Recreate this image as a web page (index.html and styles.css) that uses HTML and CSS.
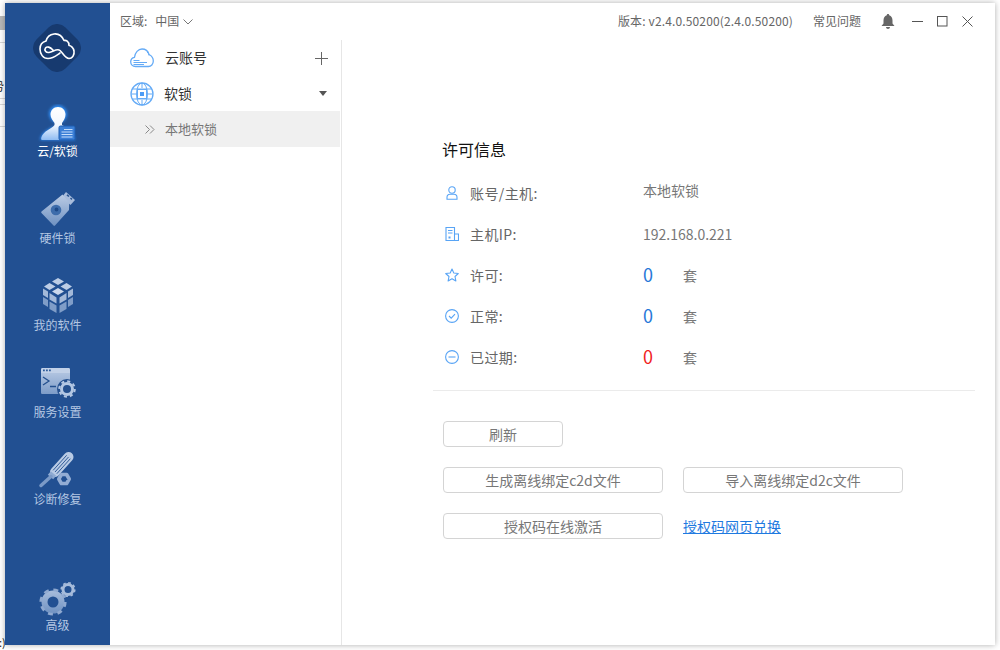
FILE: index.html
```html
<!DOCTYPE html>
<html lang="zh-CN">
<head>
<meta charset="utf-8">
<title>许可信息</title>
<link rel="stylesheet" href="styles.css">
</head>
<body>
<svg class="defs" width="0" height="0" aria-hidden="true">
  <defs>
    <linearGradient id="navg" gradientUnits="userSpaceOnUse" x1="0" y1="0" x2="0" y2="36">
      <stop offset="0" stop-color="#c3d2e9"/>
      <stop offset="1" stop-color="#6c8fc0"/>
    </linearGradient>
    <linearGradient id="actg" x1="0" y1="0" x2="0" y2="1">
      <stop offset="0" stop-color="#ffffff"/>
      <stop offset=".55" stop-color="#f2f7fe"/>
      <stop offset="1" stop-color="#8fbcf3"/>
    </linearGradient>
    <filter id="glow" x="-30%" y="-30%" width="160%" height="160%">
      <feGaussianBlur stdDeviation="1.4"/>
    </filter>
  </defs>
</svg>
<div class="backdrop">
  <span class="bit bit-a"></span>
  <span class="bit-line first"></span>
  <span class="bit-glyph">势</span>
  <span class="bit-line second"></span>
  <span class="bit-line third"></span>
  <span class="bit-line fourth"></span>
  <span class="bit-foot">:)</span>
</div>
<div class="window">
  <aside class="sidebar">
    <div class="logo">
      <svg width="48" height="48" viewBox="0 0 48 48">
        <rect x="3.500" y="3.500" width="41" height="41" rx="12" transform="rotate(45 24 24)" fill="#173a6f"/>
        <path d="M20 26C17 23 14 22 12.500 24C11 26 13 29 16 28.500C20 28 24 24 27 26.500C30 29 32 34.500 36 34.500C40 34.500 41.500 30 41 27C40.500 24 38 21.500 36 21.500C36 17 33 16 31 16.500C29 12 25 9.500 21 10C17 10.500 14 13 13 17C9 18 7 21.500 7 25C7 30 10 34.500 15 34.500C20 34.500 24 31 27 29" fill="none" stroke="#fff" stroke-width="1.600" stroke-linecap="round" stroke-linejoin="round"/>
      </svg>
    </div>
    <nav class="nav">
      <a class="nav-item active">
        <svg width="42" height="38" viewBox="0 0 42 38">
          <g filter="url(#glow)" fill="#2f8df5">
            <circle cx="21" cy="10" r="9"/><path d="M3 36C4 29 11 25 16 23H26C31 25 37 28 38 36Z"/>
          </g>
          <path d="M21 3C25.500 3 28.500 6.500 28.500 10.500C28.500 14 26.500 17 25 19V21C28 23 32 24 34 26V36H5C4 36 4 34.500 4.500 33C6.500 27 14.500 25 17.500 21V19C16 17 13.500 14 13.500 10.500C13.500 6.500 16.500 3 21 3Z" fill="url(#actg)"/>
          <rect x="22" y="22" width="16" height="14" rx="1.500" fill="#3b7fd6" stroke="#1d5db0"/>
          <path d="M27 25.500H35.500M24.500 28H35.500M24.500 30.500H35.500M24.500 33H35.500" stroke="#c5defb" stroke-width="1.100"/>
        </svg>
        <span>云/软锁</span>
      </a>
      <a class="nav-item">
        <svg width="42" height="38" viewBox="0 0 42 38">
          <path d="M29 1L38 9L33.500 14L25 6Z" fill="#a8bcdc"/>
          <path d="M30 3.800l2 1.700M33.500 7l1.500 1.300" stroke="#2b5692" stroke-width="1.600"/>
          <path d="M25.500 3.500L32 11.500C32.500 12 32.500 12.500 32.200 13L32 19L18 34.500C17.500 35 17 35 16.500 34.500L4.500 22C4 21.500 4 21 4.500 20.500Z" fill="url(#navg)"/>
          <circle cx="19" cy="19" r="5.300" fill="#3d6cab"/>
          <circle cx="19.500" cy="18.500" r="1.900" fill="#1e4a88"/>
        </svg>
        <span>硬件锁</span>
      </a>
      <a class="nav-item">
        <svg width="42" height="38" viewBox="0 0 42 38">
          <path d="M21 0L27 3.500L21 7L15 3.500Z" fill="#bccde6"/>
          <path d="M12.500 5L18.500 8.500L12.500 12L7 8.500Z" fill="#bccde6"/>
          <path d="M29.500 5L35 8.500L29.500 12L23.500 8.500Z" fill="#bccde6"/>
          <path d="M21 10L27 13.500L21 17L15 13.500Z" fill="#cbd8ec"/>
          <path d="M6 10.500L11 13.500V20L6 17Z" fill="#a3b9d9"/>
          <path d="M12.500 15L19.500 19.500V25.500L12.500 21.500Z" fill="#a3b9d9"/>
          <path d="M36 10.500L31 13.500V20L36 17Z" fill="#a3b9d9"/>
          <path d="M29.500 15L22.500 19.500V25.500L29.500 21.500Z" fill="#a3b9d9"/>
          <path d="M6 19L11 22V29L6 26Z" fill="#7f9dc8"/>
          <path d="M12.500 23.500L19.500 27.500V35L12.500 31Z" fill="#7f9dc8"/>
          <path d="M36 19L31 22V29L36 26Z" fill="#7f9dc8"/>
          <path d="M29.500 23.500L22.500 27.500V35L29.500 31Z" fill="#7f9dc8"/>
        </svg>
        <span>我的软件</span>
      </a>
      <a class="nav-item">
        <svg width="42" height="38" viewBox="0 0 42 38">
          <path d="M4 4.500C4 3.500 4.500 3 5.500 3H31.500C32.500 3 33 3.500 33 4.500V8H4Z" fill="#c2d1e8"/>
          <path d="M4 8H33V27.500C33 28.500 32.500 29 31.500 29H5.500C4.500 29 4 28.500 4 27.500Z" fill="url(#navg)"/>
          <path d="M6 4.500h1.800v1.800H6zM9 4.500h1.800v1.800H9zM12 4.500h1.800v1.800H12z" fill="#2f5c9a"/>
          <path d="M6 12L12 16L6 20M13 21.500H19" fill="none" stroke="#24508f" stroke-width="1.300"/>
          <circle cx="30" cy="24" r="10" fill="#24508f"/>
          <circle cx="30" cy="24" r="5.500" fill="none" stroke="#b3c7e3" stroke-width="3"/>
          <circle cx="30" cy="24" r="7.800" fill="none" stroke="#b3c7e3" stroke-width="2" stroke-dasharray="3.060 3.060"/>
        </svg>
        <span>服务设置</span>
      </a>
      <a class="nav-item">
        <svg width="42" height="38" viewBox="0 0 42 38">
          <path d="M31.500 5L18 20" stroke="#b9cbe5" stroke-width="10" stroke-linecap="round"/>
          <path d="M33.350 6.700L19.850 21.700M31.500 5L18 20M29.650 3.300L16.150 18.300" stroke="#24508f" stroke-width=".9"/>
          <path d="M16.500 21.500L13.500 25" stroke="#8eaad2" stroke-width="7"/>
          <path d="M14 24.500L4 33.500" stroke="#7b9ac7" stroke-width="3.500" stroke-linecap="round"/>
          <path d="M21.800 27L24.400 22.500H29.600L32.200 27L29.600 31.500H24.400Z" fill="none" stroke="#93add4" stroke-width="3.600" stroke-linejoin="round"/>
        </svg>
        <span>诊断修复</span>
      </a>
      <a class="nav-item nav-bottom">
        <svg width="42" height="38" viewBox="0 0 42 38">
          <circle cx="16" cy="23" r="8.500" fill="none" stroke="url(#navg)" stroke-width="6"/>
          <circle cx="16" cy="23" r="12.200" fill="none" stroke="#8fa9d0" stroke-width="2.800" stroke-dasharray="4.900 4.680"/>
          <circle cx="31" cy="10.500" r="5" fill="none" stroke="#a7bcdb" stroke-width="3"/>
          <circle cx="31" cy="10.500" r="6.800" fill="none" stroke="#a7bcdb" stroke-width="1.600" stroke-dasharray="2.700 2.640"/>
        </svg>
        <span>高级</span>
      </a>
    </nav>
  </aside>
  <div class="main">
    <header class="topbar">
      <div class="region">
        <span class="lift">区域:</span>
        <span class="lift region-value">中国</span>
        <svg width="10" height="6" viewBox="0 0 10 6"><path d="M.5 .5L5 5L9.500 .5" fill="none" stroke="#777"/></svg>
      </div>
      <div class="top-right">
        <span class="version lift">版本: v2.4.0.50200(2.4.0.50200)</span>
        <span class="faq lift">常见问题</span>
        <svg class="bell" width="14" height="15" viewBox="0 0 14 15"><path d="M7 0C7.800 0 8.200 .5 8.200 1.200C10.500 2 11.500 4 11.500 6.500V9.500L13.500 12H.5L2.500 9.500V6.500C2.500 4 3.500 2 5.800 1.200C5.800 .5 6.200 0 7 0Z" fill="#666"/><path d="M5 13H9C9 14.300 8 15 7 15C6 15 5 14.300 5 13Z" fill="#666"/></svg>
        <div class="win-btns">
          <svg width="11" height="11" viewBox="0 0 11 11"><path d="M0 5.500H11" stroke="#555"/></svg>
          <svg width="11" height="11" viewBox="0 0 11 11"><rect x=".5" y=".5" width="9.500" height="9.500" fill="none" stroke="#555"/></svg>
          <svg width="11" height="11" viewBox="0 0 11 11"><path d="M.5 .5L10.500 10.500M10.500 .5L.5 10.500" stroke="#555"/></svg>
        </div>
      </div>
    </header>
    <div class="body">
      <section class="tree">
        <div class="tree-row">
          <svg class="tree-icon" width="24" height="20" viewBox="0 0 24 20"><path d="M5.500 18.500C2.500 18.500 .7 16.300 .7 13.800C.7 11.300 2.300 9.700 4.500 9.300C5 4.500 8.300 1 12 1C15.500 1 18 3 19 6.500C21.700 7.800 23.300 10.300 23.300 13C23.300 16.300 21 18.500 18.500 18.500Z" fill="none" stroke="#65abf6" stroke-width="1.300"/><path d="M17 4C18.500 5 19 6 19 7.500M3.500 12.500H9.500M3.500 14.500H17M3.500 16.500H14" fill="none" stroke="#65abf6"/></svg>
          <span class="tree-label lift">云账号</span>
          <svg class="tree-end" width="13" height="13" viewBox="0 0 13 13"><path d="M6.500 0V13M0 6.500H13" stroke="#666"/></svg>
        </div>
        <div class="tree-row second">
          <svg class="tree-icon" width="24" height="24" viewBox="0 0 24 24"><g fill="none" stroke="#65abf6"><circle cx="12" cy="12" r="11" stroke-width="1.300"/><ellipse cx="12" cy="12" rx="5.500" ry="11"/><path d="M2 7H22M2 17H22M12 1V6M12 18V23M1 12H6M18 12H23"/><rect x="7.500" y="7.500" width="9" height="9"/></g><rect x="10" y="10" width="4" height="4" fill="#4c9cf5"/></svg>
          <span class="tree-label lift">软锁</span>
          <span class="caret"></span>
        </div>
        <div class="tree-child">
          <svg width="10" height="9" viewBox="0 0 10 9"><path d="M.5 .5L4.500 4.500L.5 8.500M5 .5L9 4.500L5 8.500" fill="none" stroke="#888"/></svg>
          <span class="lift">本地软锁</span>
        </div>
      </section>
      <section class="content">
        <h2 class="title">许可信息</h2>
        <dl class="info">
          <div class="info-row offset">
            <dt><svg width="14" height="14" viewBox="0 0 14 14"><g fill="none" stroke="#58a4f5" stroke-width="1.100"><circle cx="7" cy="4" r="3.200"/><path d="M2 13.300V11.500C2 9.500 3.500 8.300 5 8.300H9C10.500 8.300 12 9.500 12 11.500V13.300Z"/></g></svg><span>账号/主机:</span></dt>
            <dd class="raised">本地软锁</dd>
          </div>
          <div class="info-row">
            <dt><svg width="14" height="14" viewBox="0 0 14 14"><g fill="none" stroke="#58a4f5" stroke-width="1.100"><path d="M9.500 13.500H1V.5H9.500Z"/><path d="M9.500 7H13.500V13.500H9.500M3 3.500H7.500M3 6H7.500"/></g><rect x="3.500" y="9.500" width="2" height="2" fill="#58a4f5"/></svg><span>主机IP:</span></dt>
            <dd>192.168.0.221</dd>
          </div>
          <div class="info-row">
            <dt><svg width="14" height="14" viewBox="0 0 14 14"><path d="M7 1L8.800 5L13.300 5.500L10 8.500L10.900 13L7 10.800L3.100 13L4 8.500L.7 5.500L5.200 5Z" fill="none" stroke="#58a4f5" stroke-width="1.100" stroke-linejoin="round"/></svg><span>许可:</span></dt>
            <dd class="count"><b class="num blue">0</b><span>套</span></dd>
          </div>
          <div class="info-row">
            <dt><svg width="14" height="14" viewBox="0 0 14 14"><g fill="none" stroke="#58a4f5" stroke-width="1.100"><circle cx="7" cy="7" r="6.400"/><path d="M4 7L6.200 9.200L10 5.200"/></g></svg><span>正常:</span></dt>
            <dd class="count"><b class="num blue">0</b><span>套</span></dd>
          </div>
          <div class="info-row">
            <dt><svg width="14" height="14" viewBox="0 0 14 14"><g fill="none" stroke="#58a4f5" stroke-width="1.100"><circle cx="7" cy="7" r="6.400"/><path d="M3.500 7H10.500"/></g></svg><span>已过期:</span></dt>
            <dd class="count"><b class="num red">0</b><span>套</span></dd>
          </div>
        </dl>
        <hr class="divider">
        <div class="actions">
          <div class="action-row"><button class="btn short">刷新</button></div>
          <div class="action-row"><button class="btn">生成离线绑定c2d文件</button><button class="btn">导入离线绑定d2c文件</button></div>
          <div class="action-row"><button class="btn">授权码在线激活</button><a class="link">授权码网页兑换</a></div>
        </div>
      </section>
    </div>
  </div>
</div>
</body>
</html>
```
FILE: styles.css
```css
* { box-sizing: border-box; }
html, body { margin: 0; height: 100%; }
body {
  width: 1000px;
  height: 650px;
  overflow: hidden;
  display: flex;
  background: #fff;
  font-family: "Noto Sans CJK SC", "Noto Sans", sans-serif;
  font-size: 14px;
  color: #666;
}
.defs { position: absolute; }
.backdrop {
  width: 5px;
  height: 650px;
  flex: none;
  display: flex;
  flex-direction: column;
  overflow: hidden;
  font-size: 12px;
  color: #222;
}
.bit { display: block; flex: none; width: 5px; height: 14px; margin-top: 16px; background: #b9b9b9; }
.bit-line { display: block; flex: none; height: 1px; background: #d8d8d8; }
.bit-line.first { margin-top: 12px; }
.bit-line.second { margin-top: 4px; }
.bit-line.third { margin-top: 5px; }
.bit-line.fourth { margin-top: 21px; }
.bit-glyph { flex: none; margin-top: 35px; margin-left: -8px; line-height: 16px; }
.bit-foot { margin-top: auto; margin-bottom: 2px; line-height: 12px; font-size: 11px; margin-left: -1px; }
.window {
  width: 990px;
  height: 642px;
  margin-top: 3px;
  flex: none;
  display: flex;
  background: #fff;
  box-shadow: 0 0 6px rgba(0, 0, 0, .32);
}
.sidebar {
  width: 105px;
  flex: none;
  display: flex;
  flex-direction: column;
  background: #225092;
}
.logo { height: 97px; padding: 21px 0 0 28px; }
.logo svg { display: block; }
.nav { flex: 1; display: flex; flex-direction: column; }
.nav-item {
  height: 87px;
  display: flex;
  flex-direction: column;
  align-items: center;
  padding-top: 4px;
  color: #b4c7e3;
  font-size: 12px;
  line-height: 16px;
}
.nav-item svg { display: block; margin-bottom: 1px; }
.nav-item.active { color: #fff; }
.nav-bottom { margin-top: auto; height: 66px; padding-top: 0; }
.nav-bottom svg { margin-bottom: 0; }
.main { flex: 1; min-width: 0; display: flex; flex-direction: column; }
.lift { padding-bottom: 2px; }
.topbar {
  height: 37px;
  flex: none;
  display: flex;
  align-items: center;
  justify-content: space-between;
  padding: 0 22px 0 10px;
  font-size: 12px;
}
.region { display: flex; align-items: center; gap: 4px; }
.region-value { margin-left: 4px; }
.top-right { display: flex; align-items: center; }
.version { letter-spacing: .14px; }
.faq { margin-left: 20px; }
.bell { margin-left: 20px; }
.win-btns { display: flex; align-items: center; gap: 14px; margin-left: 17px; }
.win-btns svg { display: block; }
.body { flex: 1; min-height: 0; display: flex; }
.tree { width: 232px; flex: none; border-right: 1px solid #e6e6e6; }
.tree-row {
  height: 36px;
  display: flex;
  align-items: center;
  padding: 0 13px 0 20px;
  color: #333;
}
.tree-row.second { height: 35px; }
.tree-icon { flex: none; }
.tree-label { margin-left: 11px; flex: 1; }
.second .tree-label { margin-left: 10px; }
.caret { width: 0; height: 0; border: 4.500px solid transparent; border-top: 5px solid #555; border-bottom: 0; margin-right: 1px; }
.tree-child {
  width: 230px;
  height: 36px;
  display: flex;
  align-items: center;
  gap: 10px;
  padding-left: 35px;
  background: #f0f0f0;
  color: #777;
  font-size: 13px;
}
.content { flex: 1; min-width: 0; padding: 0 20px 0 100px; }
.title { margin: 99px 0 0; font-size: 16px; font-weight: 400; line-height: 20px; color: #111; }
.info { margin: 0; padding-left: 1px; }
.info-row { height: 41px; display: flex; align-items: center; }
.info-row.offset { margin-top: 13px; }
.info-row dt { width: 200px; flex: none; display: flex; align-items: center; gap: 11px; padding-left: 2px; letter-spacing: .4px; }
.info-row dt svg { display: block; flex: none; }
.info-row dd { margin: 0; color: #777; }
.info-row dd.raised { position: relative; top: -3px; }
.count { display: flex; align-items: center; }
.num { width: 40px; font-weight: 400; font-size: 18px; line-height: 20px; padding-bottom: 2px; box-sizing: content-box; }
.blue { color: #2878d8; }
.red { color: #f01f1f; }
.divider { height: 1px; margin: 13px 0 0 -9px; border: 0; background: #ebebeb; }
.actions { display: flex; flex-direction: column; gap: 20px; margin-top: 30px; padding-left: 1px; }
.action-row { display: flex; align-items: center; gap: 20px; }
.btn {
  width: 220px;
  height: 26px;
  padding: 0;
  border: 1px solid #d4d4d4;
  border-radius: 4px;
  background: #fff;
  color: #777;
  font: inherit;
  line-height: 24px;
}
.btn.short { width: 120px; }
.link { color: #1f7ae0; text-decoration: underline; }
```
